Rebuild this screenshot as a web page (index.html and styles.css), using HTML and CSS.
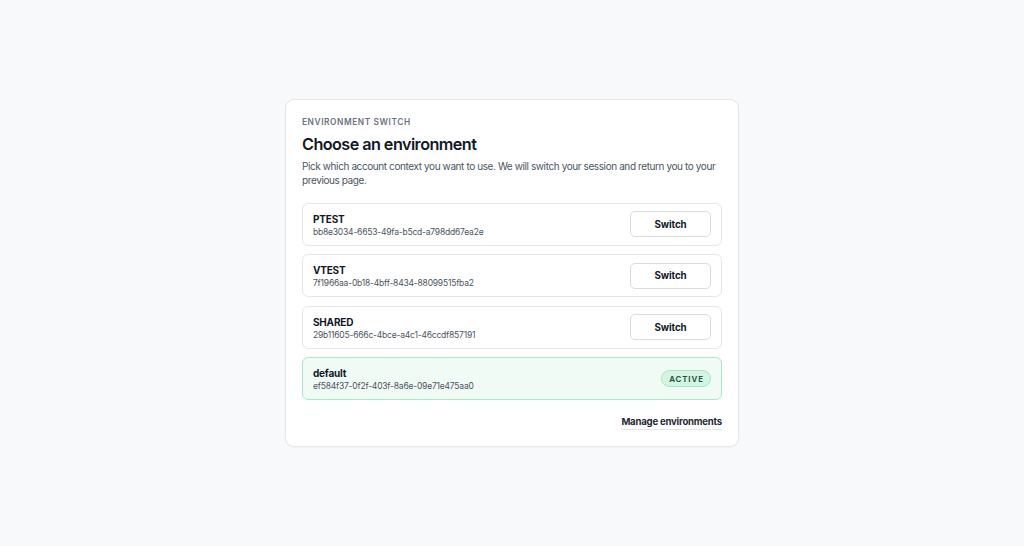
FILE: index.html
```html
<!DOCTYPE html>
<html lang="en">
<head>
<meta charset="utf-8">
<title>Environment switch</title>
<link rel="stylesheet" href="styles.css">
</head>
<body>
<main class="page">
  <section class="card">
    <div class="eyebrow">ENVIRONMENT SWITCH</div>
    <h1 class="title">Choose an environment</h1>
    <p class="lead">Pick which account context you want to use. We will switch your session and return you to your previous page.</p>
    <ul class="envs">
      <li class="env">
        <div class="env-info">
          <div class="env-name">PTEST</div>
          <div class="env-id">bb8e3034-6653-49fa-b5cd-a798dd67ea2e</div>
        </div>
        <button class="btn" type="button">Switch</button>
      </li>
      <li class="env">
        <div class="env-info">
          <div class="env-name">VTEST</div>
          <div class="env-id">7f1966aa-0b18-4bff-8434-88099515fba2</div>
        </div>
        <button class="btn" type="button">Switch</button>
      </li>
      <li class="env">
        <div class="env-info">
          <div class="env-name">SHARED</div>
          <div class="env-id">29b11605-666c-4bce-a4c1-46ccdf857191</div>
        </div>
        <button class="btn" type="button">Switch</button>
      </li>
      <li class="env env-active">
        <div class="env-info">
          <div class="env-name">default</div>
          <div class="env-id">ef584f37-0f2f-403f-8a6e-09e71e475aa0</div>
        </div>
        <span class="badge">ACTIVE</span>
      </li>
    </ul>
    <div class="footer">
      <a class="manage" href="#">Manage environments</a>
    </div>
  </section>
</main>
</body>
</html>
```

FILE: styles.css
```css
* { box-sizing: border-box; }
html, body { margin: 0; padding: 0; }
body {
  background: #f8f9fb;
  font-family: Inter, "Noto Sans", "Liberation Sans", sans-serif;
  color: #111827;
}
.page {
  min-height: 546px;
  display: flex;
  align-items: center;
  justify-content: center;
}
.card {
  width: 454px;
  background: #ffffff;
  border: 1px solid #e3e6ea;
  border-radius: 9px;
  padding: 16px 16px 16px;
  box-shadow: 0 1px 2px rgba(16, 24, 40, 0.03);
}
.eyebrow {
  font-size: 8.3px;
  line-height: 12px;
  font-weight: 600;
  letter-spacing: 0.6px;
  color: #6b7280;
}
.title {
  margin: 4px 0 0;
  font-size: 16.2px;
  line-height: 24px;
  font-weight: 600;
  letter-spacing: -0.55px;
  color: #111827;
}
.lead {
  margin: 3px 0 0;
  font-size: 10px;
  line-height: 14px;
  letter-spacing: -0.4px;
  color: #4b5563;
}
.envs {
  list-style: none;
  margin: 16px 0 0;
  padding: 0;
  display: flex;
  flex-direction: column;
  gap: 8.4px;
}
.env {
  height: 43px;
  display: flex;
  align-items: center;
  justify-content: space-between;
  padding: 0 10px;
  border: 1px solid #e5e7eb;
  border-radius: 6px;
  background: #ffffff;
}
.env-active {
  background: #effbf4;
  border-color: #a9e9c8;
}
.env-info {
  display: flex;
  flex-direction: column;
  padding-top: 2px;
}
.env-name {
  font-size: 10px;
  line-height: 13px;
  font-weight: 650;
  letter-spacing: -0.2px;
  color: #111827;
}
.env-id {
  font-size: 8.5px;
  line-height: 12px;
  letter-spacing: -0.2px;
  color: #4b5563;
}
.btn {
  width: 81px;
  height: 26px;
  border: 1px solid #d9dce1;
  border-radius: 5px;
  background: #ffffff;
  font-family: inherit;
  font-size: 9.8px;
  font-weight: 650;
  letter-spacing: -0.1px;
  color: #111827;
  padding: 0;
}
.badge {
  width: 50px;
  height: 17px;
  display: flex;
  align-items: center;
  justify-content: center;
  border-radius: 9px;
  background: #d4f5e3;
  border: 1px solid #a7e5c4;
  font-size: 7.8px;
  font-weight: 700;
  letter-spacing: 0.9px;
  color: #1f5c3f;
  padding-left: 1px;
}
.footer {
  display: flex;
  justify-content: flex-end;
  margin-top: 15px;
}
.manage {
  font-size: 9.6px;
  line-height: 14px;
  font-weight: 650;
  letter-spacing: -0.22px;
  color: #1f2937;
  text-decoration: none;
  border-bottom: 1px solid #e5e7eb;
}
```
